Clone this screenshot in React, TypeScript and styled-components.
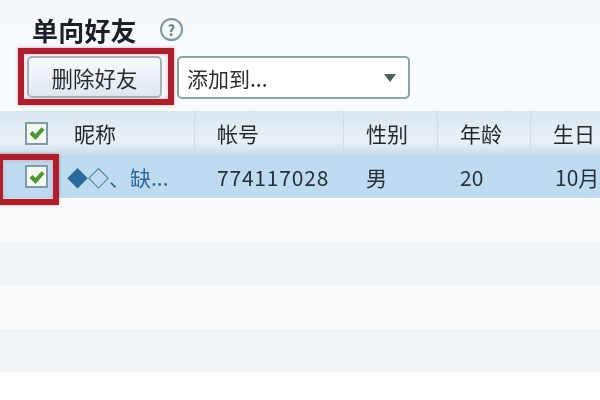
import styled, { createGlobalStyle } from "styled-components";

const GlobalStyle = createGlobalStyle`
	html, body {
		margin: 0;
		padding: 0;
		background: #ffffff;
	}

	body {
		width: 600px;
		height: 400px;
		overflow: hidden;
		font-family: "Noto Sans CJK SC", "Liberation Sans", sans-serif;
	}
`;

const columns = "51px 143px 149px 94px 93px 70px";

const headers = ["昵称", "帐号", "性别", "年龄", "生日"];
const friend = ["◆◇、缺...", "774117028", "男", "20", "10月"];

function Tick() {
	return (
		<svg width="16" height="14" viewBox="0 0 16 14">
			<path d="M2 6.5 L6.5 11 L14 2.5" fill="none" stroke="#4c9438" strokeWidth="4" />
		</svg>
	);
}

export default function App() {
	return (
		<Page>
			<GlobalStyle />
			<TitleRow>
				<Title>单向好友</Title>
				<HelpIcon>?</HelpIcon>
			</TitleRow>

			<Toolbar>
				<DeleteButton>
					删除好友
					<ButtonHighlight />
				</DeleteButton>
				<AddSelect>
					<span>添加到...</span>
					<Arrow />
				</AddSelect>
			</Toolbar>

			<HeaderRow>
				<CheckCell>
					<CheckBox>
						<Tick />
					</CheckBox>
				</CheckCell>
				{headers.map((label) => (
					<HeaderCell key={label}>{label}</HeaderCell>
				))}
			</HeaderRow>

			<SelectedRow>
				<CheckCell>
					<CheckBox>
						<Tick />
					</CheckBox>
					<CheckHighlight />
				</CheckCell>
				{friend.map((value, i) => (
					<DataCell key={value} $index={i}>
						{value}
					</DataCell>
				))}
			</SelectedRow>

			<EmptyRow $alt={false} />
			<EmptyRow $alt={true} />
			<EmptyRow $alt={false} />
			<EmptyRow $alt={true} />
		</Page>
	);
}

const Page = styled.main`
	width: 600px;
	height: 400px;
	background: linear-gradient(#f3f8fb 0, #f7fbfe 60px, #f8fcff 110px);
	background-repeat: no-repeat;
	background-size: 100% 111px;
	background-color: #ffffff;
	filter: blur(0.5px);
`;

const TitleRow = styled.div`
	height: 56px;
	padding: 2px 0 0 32px;
	box-sizing: border-box;
	display: flex;
	align-items: center;
`;

const Title = styled.h1`
	margin: 0;
	font-size: 26px;
	font-weight: 700;
	color: #1c2026;
	letter-spacing: 0.2px;
`;

const HelpIcon = styled.span`
	width: 19px;
	height: 19px;
	margin-left: 23px;
	border: 2px solid #7d95a6;
	border-radius: 50%;
	display: flex;
	align-items: center;
	justify-content: center;
	font-size: 15px;
	font-weight: 700;
	line-height: 1;
	color: #5d7686;
`;

const Toolbar = styled.div`
	height: 55px;
	padding-left: 27px;
	box-sizing: border-box;
	display: flex;
	align-items: flex-start;
	gap: 15px;
`;

const DeleteButton = styled.button`
	position: relative;
	width: 135px;
	height: 42px;
	padding: 0;
	border: 2px solid #a4b5c0;
	border-radius: 5px;
	background: linear-gradient(#f8fbfd, #dfe9f0);
	font-family: inherit;
	font-size: 21.5px;
	color: #272c30;
`;

const Highlight = styled.span`
	position: absolute;
	box-sizing: border-box;
	border: 6px solid #a8202e;
	box-shadow: 0 0 3px rgba(190, 50, 60, 0.5), inset 0 0 4px rgba(235, 120, 125, 0.6);
	pointer-events: none;
`;

const ButtonHighlight = styled(Highlight)`
	left: -11px;
	right: -14px;
	top: -10px;
	bottom: -9px;
`;

const CheckHighlight = styled(Highlight)`
	left: -3px;
	top: -1px;
	width: 62px;
	height: 51px;
`;

const AddSelect = styled.div`
	width: 233px;
	height: 43px;
	padding: 0 12px 0 8px;
	box-sizing: border-box;
	border: 2px solid #8ba59f;
	border-radius: 5px;
	background: #ffffff;
	display: flex;
	align-items: center;
	justify-content: space-between;
	font-size: 21px;
	color: #2a2e30;
`;

const Arrow = styled.span`
	width: 0;
	height: 0;
	border-left: 6.5px solid transparent;
	border-right: 6.5px solid transparent;
	border-top: 8px solid #47605c;
`;

const HeaderRow = styled.div`
	display: grid;
	grid-template-columns: ${columns};
	height: 44px;
	background: linear-gradient(#d9e6f0, #eaf1f6 70%, #c9dbe9);
`;

const SelectedRow = styled.div`
	display: grid;
	grid-template-columns: ${columns};
	height: 43px;
	background: #bfdbf0;
`;

const EmptyRow = styled.div<{ $alt: boolean }>`
	height: 43.5px;
	background: ${(p) => (p.$alt ? "#f2f6f9" : "#fbfcfe")};
`;

const CheckCell = styled.div`
	position: relative;
	padding-left: 25px;
	display: flex;
	align-items: center;
`;

const CheckBox = styled.span`
	width: 23px;
	height: 23px;
	box-sizing: border-box;
	border: 2px solid #7f9ba8;
	background: #f4faf2;
	display: flex;
	align-items: center;
	justify-content: center;
`;

const HeaderCell = styled.div`
	padding-left: 22px;
	border-left: 1px solid #cfdde8;
	display: flex;
	align-items: center;
	font-size: 21px;
	color: #23282e;

	&:nth-child(2) {
		padding-left: 23px;
		border-left: none;
	}
`;

const DataCell = styled.div<{ $index: number }>`
	padding-left: ${(p) => (p.$index === 0 ? "16px" : p.$index === 4 ? "25px" : "23px")};
	display: flex;
	align-items: center;
	white-space: nowrap;
	font-size: 21px;
	letter-spacing: ${(p) => (p.$index === 1 ? "0.8px" : "0")};
	color: ${(p) => (p.$index === 0 ? "#2b6a9a" : "#25303a")};
`;
